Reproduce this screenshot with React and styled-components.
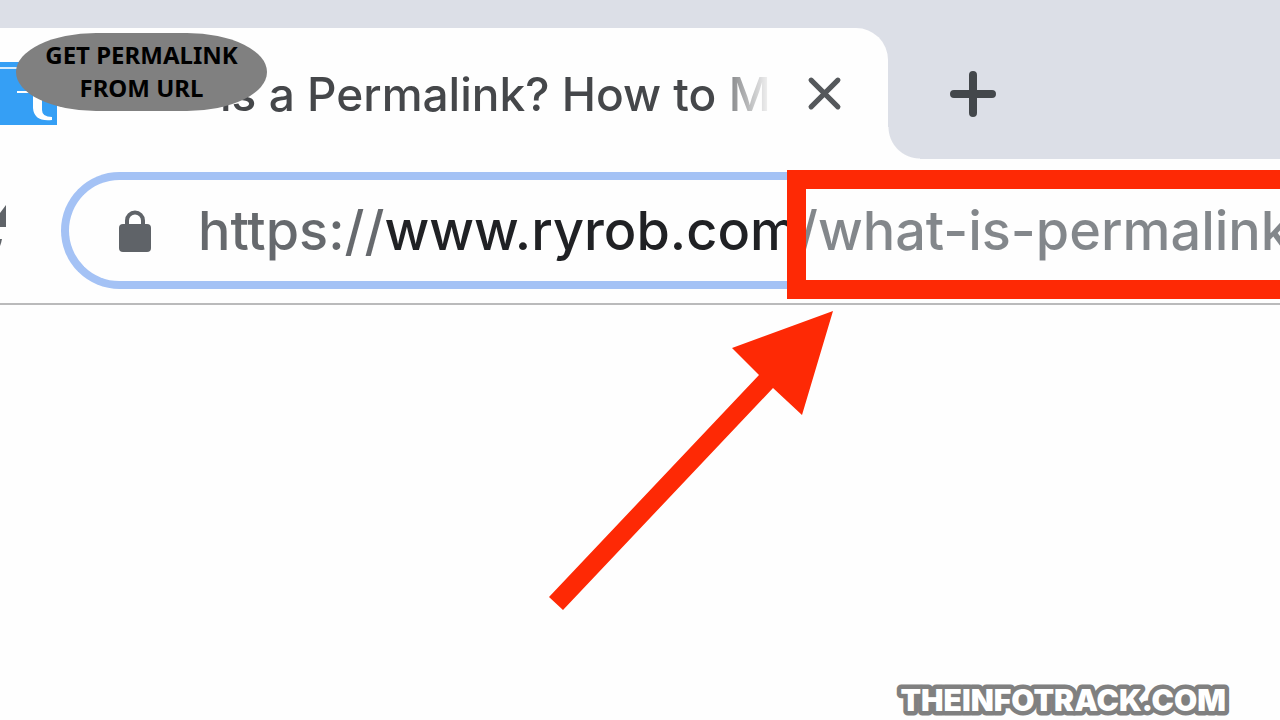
import React, { useState } from "react";
import styled, { createGlobalStyle } from "styled-components";

const GlobalStyle = createGlobalStyle`
  * {
    box-sizing: border-box;
  }
  body {
    margin: 0;
    background: #fefefe;
    font-family: Inter, "Liberation Sans", sans-serif;
  }
`;

const Page = styled.div`
  position: relative;
  display: flex;
  flex-direction: column;
  min-height: 100vh;
  overflow: hidden;
`;

const TabStrip = styled.header`
  display: flex;
  align-items: stretch;
  gap: 60px;
  padding-top: 28px;
  background: #dcdfe7;
`;

const Tab = styled.div`
  position: relative;
  display: flex;
  align-items: center;
  flex: 0 1 888px;
  min-width: 0;
  padding: 34px 46px 34px 0;
  border-top-right-radius: 32px;
  background: #fefefe;

  &::after {
    content: "";
    position: absolute;
    left: 100%;
    bottom: 0;
    width: 32px;
    height: 32px;
    background: radial-gradient(circle at top right, transparent 31px, #fefefe 32px);
  }
`;

const Favicon = styled.svg`
  flex: none;
  width: 57px;
  height: 63px;
`;

const TabTitle = styled.span`
  flex: 1;
  min-width: 0;
  margin-left: 163px;
  overflow: hidden;
  color: #45474a;
  font-size: 46px;
  font-weight: 500;
  line-height: 60px;
  white-space: nowrap;
  mask-image: linear-gradient(to left, transparent 0, rgba(0, 0, 0, 0.6) 40px, #000 56px);
`;

const IconButton = styled.button`
  display: flex;
  align-items: center;
  justify-content: center;
  flex: none;
  margin: 0;
  padding: 0;
  border: 0;
  background: none;
  color: ${({ $color }) => $color};
`;

const CloseButton = styled(IconButton)`
  margin-left: 34px;
`;

const Toolbar = styled.div`
  position: relative;
  display: flex;
  align-items: center;
  gap: 53px;
  padding: 13px 0 14px;
  border-bottom: 2px solid #bababb;
`;

const Omnibox = styled.label`
  display: flex;
  align-items: center;
  flex: 1;
  min-width: 0;
  height: 117px;
  padding-left: 50px;
  border: 8px solid #a4c2f5;
  border-right: 0;
  border-radius: 59px 0 0 59px;
`;

const UrlInput = styled.input`
  flex: 1;
  min-width: 0;
  margin: 0 0 0 47px;
  padding: 0;
  border: 0;
  outline: 0;
  font-family: inherit;
  font-size: 54px;
  font-weight: 450;
  line-height: 72px;
  color: transparent;
  caret-color: #202124;
  background: linear-gradient(to right, #66696d 0 187px, #202124 187px 591px, #83878b 591px);
  background-clip: text;
`;

const PathFrame = styled.div`
  position: absolute;
  top: 11px;
  right: 0;
  left: 787px;
  height: 129px;
  border: 19px solid #fe2905;
  border-right: 0;
  pointer-events: none;
`;

const Content = styled.main`
  flex: 1;
  padding: 6px 0 0 549px;
`;

const Arrow = styled.svg`
  display: block;
  width: 284px;
  height: 299px;
`;

const Badge = styled.div`
  position: absolute;
  top: 33px;
  left: 16px;
  width: 251px;
  padding: 5px 0 7px;
  border-radius: 80px / 39px;
  background: #808080;
  color: #000;
  font-family: "Noto Sans", sans-serif;
  font-size: 24px;
  font-weight: 700;
  line-height: 33px;
  text-align: center;
`;

const Watermark = styled.svg`
  position: absolute;
  right: 48px;
  bottom: 0;
  width: 340px;
  height: 40px;

  text {
    fill: #fff;
    stroke: #808080;
    stroke-width: 9px;
    stroke-linejoin: round;
    paint-order: stroke;
    font-size: 30px;
    font-weight: 900;
    text-anchor: end;
  }
`;

const ReloadIcon = () => (
  <svg width="8" height="60" viewBox="0 0 8 60" aria-hidden="true">
    <path d="M6 4V26H0V12Z" fill="#5f6368" />
    <path d="M0 38H2Q1 43 0 45Z" fill="#5f6368" />
  </svg>
);

const LockIcon = () => (
  <svg width="32" height="42" viewBox="0 0 32 42" aria-hidden="true">
    <path d="M8 17V10.5a8 8 0 0 1 16 0V17" fill="none" stroke="#5f6368" strokeWidth="4" />
    <rect y="14" width="32" height="28" rx="4" fill="#5f6368" />
  </svg>
);

const App = () => {
  const [url, setUrl] = useState("https://www.ryrob.com/what-is-permalink");

  return (
    <>
      <GlobalStyle />
      <Page>
        <TabStrip>
          <Tab>
            <Favicon viewBox="0 0 57 63" aria-hidden="true">
              <rect width="57" height="63" fill="#359ff5" />
              <path d="M0 6H18" stroke="#d5ebfd" strokeWidth="2" />
              <path d="M17 29H42V48Q42 55 52 55V58Q34 60 33 46V31H17Z" fill="#fff" />
            </Favicon>
            <TabTitle>is a Permalink? How to M</TabTitle>
            <CloseButton type="button" aria-label="Close tab" $color="#55585b">
              <svg width="35" height="35" viewBox="0 0 34 34" fill="none" stroke="currentColor" strokeWidth="5" strokeLinecap="round">
                <path d="M4 4 30 30M30 4 4 30" />
              </svg>
            </CloseButton>
          </Tab>
          <IconButton type="button" aria-label="New tab" $color="#43474b">
            <svg width="50" height="50" viewBox="0 0 50 50" fill="none" stroke="currentColor" strokeWidth="8" strokeLinecap="round">
              <path d="M25 6V44M6 25H44" />
            </svg>
          </IconButton>
        </TabStrip>
        <Toolbar>
          <IconButton type="button" aria-label="Reload">
            <ReloadIcon />
          </IconButton>
          <Omnibox>
            <LockIcon />
            <UrlInput
              aria-label="Address"
              spellCheck={false}
              value={url}
              onChange={(e) => setUrl(e.target.value)}
            />
          </Omnibox>
          <PathFrame />
        </Toolbar>
        <Content>
          <Arrow viewBox="0 0 284 299" role="img" aria-label="Arrow to the permalink">
            <path d="M284 0 253 104 224 77 14 299 0 286 210 64 183 37Z" fill="#fe2905" />
          </Arrow>
        </Content>
        <Badge>
          GET PERMALINK
          <br />
          FROM URL
        </Badge>
        <Watermark>
          <text x="334" y="31">
            THEINFOTRACK.COM
          </text>
        </Watermark>
      </Page>
    </>
  );
};

export default App;
